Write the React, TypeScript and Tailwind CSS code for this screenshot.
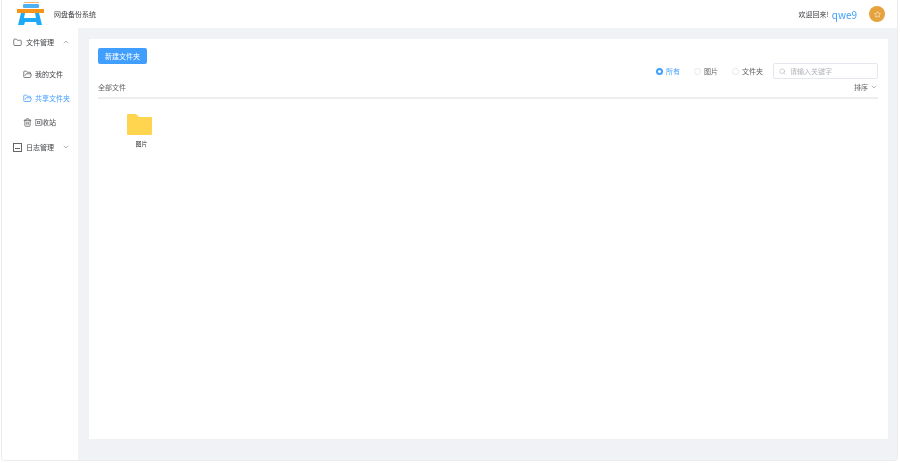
import { ChevronDown, ChevronUp, Folder, FolderOpen, Search, Star, Trash2 } from "lucide-react";

const font = { fontFamily: '"Noto Sans CJK SC", "Liberation Sans", sans-serif' };

function Logo() {
  return (
    <svg width="28" height="24" viewBox="0 0 28 24">
      <rect x="7" y="0" width="15" height="1" fill="#f6b26b" />
      <rect x="6" y="2" width="16" height="4" rx="1" fill="#4db1f5" />
      <rect x="0" y="7" width="27" height="4" fill="#f7941d" />
      <path d="M4 11h4l-1 5h12l-1-5h4l3 12h-5l-1-3H8l-1 3H1z" fill="#1eaaf9" />
    </svg>
  );
}

function Radio({ label, active }: { label: string; active?: boolean }) {
  return (
    <label className={`flex items-center gap-[3px] text-[7px] ${active ? "text-[#409eff]" : "text-[#606266]"}`}>
      {active ? (
        <span className="flex h-[7px] w-[7px] items-center justify-center rounded-full bg-[#409eff]">
          <span className="h-[3px] w-[3px] rounded-full bg-white" />
        </span>
      ) : (
        <span className="h-[7px] w-[7px] rounded-full border border-[#e4e7ed] bg-white" />
      )}
      <span>{label}</span>
    </label>
  );
}

export default function App() {
  return (
    <div style={font} className="h-[463px] w-[900px] overflow-hidden bg-white pr-[2px] pb-[2px] pl-[1px] blur-[0.3px]">
      <div className="flex h-full flex-col overflow-hidden rounded-b-[4px] border-r border-b border-l border-[#ececec] bg-white">
        {/* Top bar */}
        <header className="flex h-[28px] shrink-0 items-center justify-between pr-[12px] pl-[15px]">
          <div className="flex items-center gap-[9px]">
            <Logo />
            <span className="text-[7px] text-[#404246]">网盘备份系统</span>
          </div>
          <div className="flex items-center">
            <span className="text-[7px] text-[#404246]">欢迎回来!</span>
            <span className="ml-[3px] text-[10px] text-[#409eff]">qwe9</span>
            <span className="ml-[12px] flex h-[16px] w-[16px] items-center justify-center rounded-full bg-[#e6a23c]">
              <Star size={7} color="#fff" />
            </span>
          </div>
        </header>

        <div className="flex min-h-0 flex-1">
          {/* Sidebar */}
          <aside className="w-[76px] shrink-0 bg-white text-[7px] text-[#404246]">
            <div className="flex h-[28px] items-center pr-[8px] pl-[11px]">
              <Folder size={9} color="#555" strokeWidth={2} />
              <span className="ml-[4px] flex-1">文件管理</span>
              <ChevronUp size={8} color="#909399" />
            </div>
            <div className="mt-[4px]">
              <div className="flex h-[28px] items-center gap-[3px] pl-[21px]">
                <FolderOpen size={9} color="#555" strokeWidth={2} />
                <span>我的文件</span>
              </div>
              <div className="flex h-[20px] items-center gap-[3px] pl-[21px] text-[#409eff]">
                <FolderOpen size={9} color="#409eff" strokeWidth={2} />
                <span>共享文件夹</span>
              </div>
              <div className="flex h-[28px] items-center gap-[3px] pl-[21px]">
                <Trash2 size={9} color="#555" strokeWidth={2} />
                <span>回收站</span>
              </div>
            </div>
            <div className="flex h-[22px] items-center pr-[8px] pl-[11px]">
              <svg width="9" height="9" viewBox="0 0 9 9" fill="none" stroke="#666">
                <rect x="0.5" y="0.5" width="8" height="8" />
                <path d="M2 5.5h5" />
              </svg>
              <span className="ml-[4px] flex-1">日志管理</span>
              <ChevronDown size={8} color="#909399" />
            </div>
          </aside>

          {/* Main */}
          <main className="min-w-0 flex-1 bg-[#f0f2f5] pt-[11px] pr-[9px] pb-[21px] pl-[11px]">
            <div className="h-full bg-white pt-[9px] pr-[10px] pl-[9px]">
              <div className="flex items-start justify-between">
                <button className="h-[16px] w-[49px] rounded-[2px] bg-[#409eff] text-[7px] text-white">新建文件夹</button>
                <div className="mt-[15px] flex items-center">
                  <div className="flex items-center gap-[14px]">
                    <Radio label="所有" active />
                    <Radio label="图片" />
                    <Radio label="文件夹" />
                  </div>
                  <div className="ml-[10px] flex h-[16px] w-[105px] items-center gap-[4px] rounded-[2px] border border-[#e4e7ed] pl-[5px] text-[7px] text-[#b0b3b8]">
                    <Search size={7} color="#b0b3b8" />
                    <span>请输入关键字</span>
                  </div>
                </div>
              </div>
              <div className="mt-[1px] flex h-[19px] items-center justify-between border-b-2 border-[#eeeeee] pb-[3px] text-[7px] text-[#606266]">
                <span>全部文件</span>
                <span className="flex items-center gap-[2px]">
                  排序
                  <ChevronDown size={8} color="#909399" />
                </span>
              </div>
              <div className="mt-[15px] ml-[29px] flex w-[25px] flex-col items-center">
                <svg width="25" height="21" viewBox="0 0 25 21">
                  <path d="M0 1a1 1 0 0 1 1-1h8l3 3h12a1 1 0 0 1 1 1v16a1 1 0 0 1-1 1H1a1 1 0 0 1-1-1z" fill="#ffd54f" />
                </svg>
                <span className="mt-[4px] pl-[4px] text-[6px] text-[#303133]">图片</span>
              </div>
            </div>
          </main>
        </div>
      </div>
    </div>
  );
}
